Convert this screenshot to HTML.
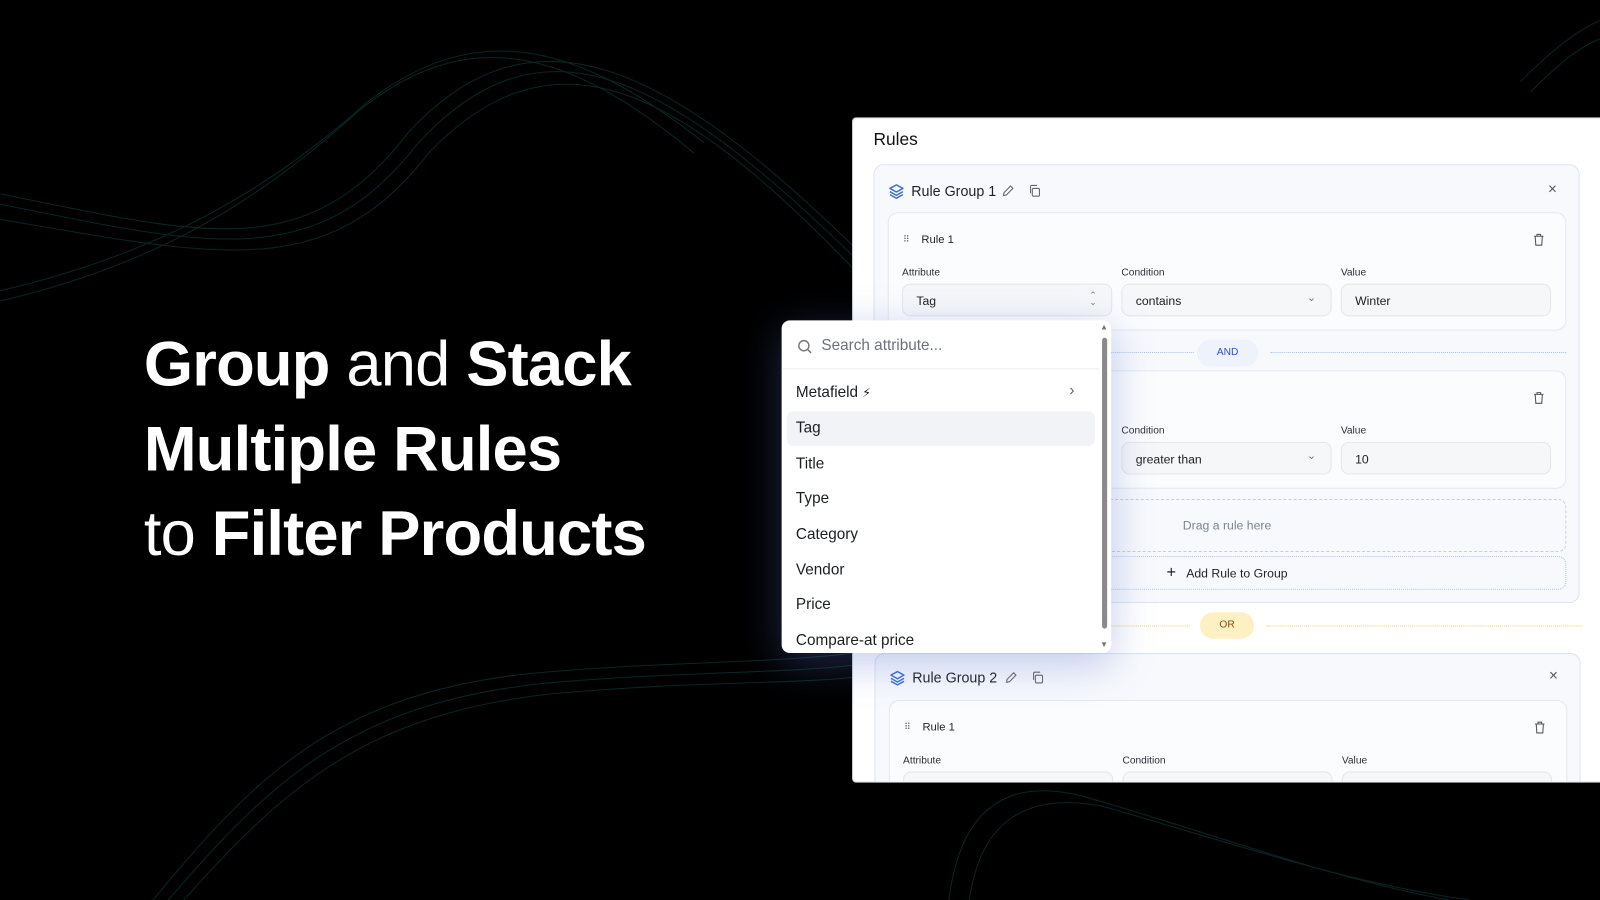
<!DOCTYPE html>
<html><head><meta charset="utf-8">
<style>
*{box-sizing:border-box;margin:0;padding:0}
html,body{width:1600px;height:900px;overflow:hidden;background:#000}
#s{position:absolute;left:0;top:0;width:1568px;height:882px;transform:scale(1.020408);transform-origin:0 0;font-family:"Liberation Sans",sans-serif}
.abs{position:absolute}
h1{position:absolute;left:141px;top:316px;color:#fff;font-size:62px;line-height:83px;font-weight:700;letter-spacing:-0.8px}
h1 span{font-weight:400}
.panel{left:835px;top:115px;width:760px;height:652px;background:#fff;border:1px solid #cfd3da;border-radius:4px 0 0 4px;overflow:hidden}
.grp{position:absolute;background:#f7f9fd;border:1px solid #d9e5f7;border-radius:10px}
.card{position:absolute;background:#fbfcfe;border:1px solid #e4e8ef;border-radius:10px}
.t{position:absolute;white-space:nowrap;color:#1f2328}
.lbl{font-size:10px;color:#2b2f36}
.inp{position:absolute;height:32px;width:206px;background:#f6f7f9;border:1px solid #e3e6eb;border-radius:8px;font-size:12px;color:#222;padding:9px 13px}
.dd{left:766px;top:314px;width:323px;height:326px;background:#fff;border-radius:8px;box-shadow:0 10px 40px rgba(90,110,200,.35);overflow:hidden}
.it{position:absolute;left:14px;font-size:15px;color:#1b1e24}
</style></head><body><div id="s">
<svg class="abs" style="left:0;top:0" width="1568" height="882" viewBox="0 0 1568 882" fill="none" stroke="#0c302d" stroke-width="1" opacity=".8">
<g>
<path d="M0 190 C200 230 300 260 400 130 C520 0 650 60 835 240"/>
<path d="M0 200 C200 240 310 270 410 140 C530 10 650 70 835 250"/>
<path d="M0 215 C210 250 320 280 420 150 C540 25 660 80 835 262"/>
<path d="M0 295 C150 260 250 200 350 110 C460 20 560 50 680 150"/>
<path d="M0 285 C150 250 260 190 360 100 C470 15 570 45 690 140"/>
<path d="M150 882 C250 760 330 680 520 660 C650 648 760 650 835 640"/>
<path d="M165 882 C265 765 345 690 530 670 C660 658 770 660 835 652"/>
<path d="M180 882 C280 770 360 700 540 680 C670 668 780 670 835 664"/>
<path d="M930 882 C940 800 980 760 1060 780 C1200 820 1300 860 1420 882"/>
<path d="M950 882 C960 810 1000 775 1080 790 C1220 830 1320 865 1440 882"/>
<path d="M1490 80 C1520 50 1545 30 1568 20"/>
<path d="M1500 90 C1530 60 1550 45 1568 38"/>
</g></svg>

<h1>Group <span>and</span> Stack<br>Multiple Rules<br><span>to</span> Filter Products</h1>

<div class="abs panel">
 <div class="t" style="left:20px;top:11px;font-size:17px;color:#111">Rules</div>
 <div class="grp" style="left:20px;top:45px;width:692px;height:430px">
  <svg class="abs" style="left:13px;top:17px" width="17" height="17" viewBox="0 0 24 24" fill="none" stroke="#3b6fe0" stroke-width="2" stroke-linejoin="round"><path d="M12 3 3 8l9 5 9-5z"/><path d="M3 12.5l9 5 9-5"/><path d="M3 16.5l9 5 9-5"/></svg>
  <div class="t" style="left:36px;top:17px;font-size:14px">Rule Group 1</div>
  <svg class="abs" style="left:124px;top:18px" width="14" height="14" viewBox="0 0 24 24" fill="none" stroke="#666" stroke-width="1.8"><path d="M4 20l1-5L16 4l4 4L9 19z"/></svg>
  <svg class="abs" style="left:150px;top:18px" width="14" height="14" viewBox="0 0 24 24" fill="none" stroke="#666" stroke-width="1.8"><rect x="8" y="8" width="12" height="13" rx="2"/><path d="M5 16V5a2 2 0 0 1 2-2h9"/></svg>
  <div class="t" style="left:660px;top:15px;font-size:15px;color:#555">×</div>
  <div class="card" style="left:13px;top:46px;width:665px;height:116px">
   <div class="t" style="left:14px;top:20px;font-size:9px;color:#667">⠿</div>
   <div class="t" style="left:32px;top:20px;font-size:11px">Rule 1</div>
   <svg class="abs" style="left:630px;top:19px" width="14" height="14" viewBox="0 0 24 24" fill="none" stroke="#555" stroke-width="1.8"><path d="M4 6h16M9 6V3h6v3M6 6l1 15h10l1-15"/></svg>
   <div class="t lbl" style="left:13px;top:53px">Attribute</div>
   <div class="t lbl" style="left:228px;top:53px">Condition</div>
   <div class="t lbl" style="left:443px;top:53px">Value</div>
   <div class="inp" style="left:13px;top:69px">Tag<span style="position:absolute;right:14px;top:7px;font-size:9px;color:#777;line-height:7px">⌃<br>⌄</span></div>
   <div class="inp" style="left:228px;top:69px">contains<span style="position:absolute;right:14px;top:6px;font-size:11px;color:#777">⌄</span></div>
   <div class="inp" style="left:443px;top:69px">Winter</div>
  </div>
  <div class="abs" style="left:13px;top:183px;width:300px;border-top:1px dotted #a9c3ee"></div>
  <div class="abs" style="left:388px;top:183px;width:290px;border-top:1px dotted #a9c3ee"></div>
  <div class="abs" style="left:316px;top:171px;width:60px;height:26px;border-radius:13px;background:#edf2fc;color:#2d4fc8;font-size:10px;text-align:center;line-height:26px">AND</div>
  <div class="card" style="left:13px;top:201px;width:665px;height:116px">
   <svg class="abs" style="left:630px;top:19px" width="14" height="14" viewBox="0 0 24 24" fill="none" stroke="#555" stroke-width="1.8"><path d="M4 6h16M9 6V3h6v3M6 6l1 15h10l1-15"/></svg>
   <div class="t lbl" style="left:228px;top:53px">Condition</div>
   <div class="t lbl" style="left:443px;top:53px">Value</div>
   <div class="inp" style="left:228px;top:69px">greater than<span style="position:absolute;right:14px;top:6px;font-size:11px;color:#777">⌄</span></div>
   <div class="inp" style="left:443px;top:69px">10</div>
  </div>
  <div class="abs" style="left:13px;top:327px;width:665px;height:52px;border:1px dashed #c9ced6;border-radius:8px;text-align:center;line-height:50px;font-size:12px;color:#7a8494">Drag a rule here</div>
  <div class="abs" style="left:13px;top:383px;width:665px;height:33px;border:1px dotted #a9c3ee;border-radius:8px;text-align:center;line-height:31px;font-size:12px;color:#1f2328"><span style="font-size:16px;margin-right:10px">+</span>Add Rule to Group</div>
 </div>
 <div class="abs" style="left:20px;top:497px;width:310px;border-top:1px dotted #f0cf66"></div>
 <div class="abs" style="left:405px;top:497px;width:310px;border-top:1px dotted #f0cf66"></div>
 <div class="abs" style="left:340px;top:484px;width:53px;height:26px;border-radius:13px;background:#fdf1c4;color:#8a4b10;font-size:10px;text-align:center;line-height:26px">OR</div>
 <div class="grp" style="left:21px;top:524px;width:692px;height:200px">
  <svg class="abs" style="left:13px;top:15px" width="17" height="17" viewBox="0 0 24 24" fill="none" stroke="#3b6fe0" stroke-width="2" stroke-linejoin="round"><path d="M12 3 3 8l9 5 9-5z"/><path d="M3 12.5l9 5 9-5"/><path d="M3 16.5l9 5 9-5"/></svg>
  <div class="t" style="left:36px;top:15px;font-size:14px">Rule Group 2</div>
  <svg class="abs" style="left:126px;top:16px" width="14" height="14" viewBox="0 0 24 24" fill="none" stroke="#666" stroke-width="1.8"><path d="M4 20l1-5L16 4l4 4L9 19z"/></svg>
  <svg class="abs" style="left:152px;top:16px" width="14" height="14" viewBox="0 0 24 24" fill="none" stroke="#666" stroke-width="1.8"><rect x="8" y="8" width="12" height="13" rx="2"/><path d="M5 16V5a2 2 0 0 1 2-2h9"/></svg>
  <div class="t" style="left:660px;top:13px;font-size:15px;color:#555">×</div>
  <div class="card" style="left:13px;top:45px;width:665px;height:116px">
   <div class="t" style="left:14px;top:20px;font-size:9px;color:#667">⠿</div>
   <div class="t" style="left:32px;top:20px;font-size:11px">Rule 1</div>
   <svg class="abs" style="left:630px;top:19px" width="14" height="14" viewBox="0 0 24 24" fill="none" stroke="#555" stroke-width="1.8"><path d="M4 6h16M9 6V3h6v3M6 6l1 15h10l1-15"/></svg>
   <div class="t lbl" style="left:13px;top:53px">Attribute</div>
   <div class="t lbl" style="left:228px;top:53px">Condition</div>
   <div class="t lbl" style="left:443px;top:53px">Value</div>
   <div class="inp" style="left:13px;top:69px"></div>
   <div class="inp" style="left:228px;top:69px"></div>
   <div class="inp" style="left:443px;top:69px"></div>
  </div>
 </div>
</div>

<div class="abs dd">
 <svg class="abs" style="left:14px;top:17px" width="17" height="17" viewBox="0 0 24 24" fill="none" stroke="#777" stroke-width="2"><circle cx="11" cy="11" r="7"/><path d="M16.5 16.5 21 21"/></svg>
 <div class="t" style="left:39px;top:16px;font-size:15px;color:#6b717c">Search attribute...</div>
 <div class="abs" style="left:0;top:47px;width:311px;border-top:1px solid #eceef2"></div>
 <div class="it" style="top:62px">Metafield <span style="font-size:12px">⚡︎</span></div>
 <div class="t" style="left:282px;top:60px;font-size:15px;color:#666">›</div>
 <div class="abs" style="left:5px;top:89px;width:302px;height:34px;background:#f1f3f7;border-radius:6px"></div>
 <div class="it" style="top:97px">Tag</div>
 <div class="it" style="top:132px">Title</div>
 <div class="it" style="top:166px">Type</div>
 <div class="it" style="top:201px">Category</div>
 <div class="it" style="top:236px">Vendor</div>
 <div class="it" style="top:270px">Price</div>
 <div class="it" style="top:305px">Compare-at price</div>
 <div class="abs" style="left:314px;top:17px;width:5px;height:285px;background:#8a8a8a;border-radius:3px"></div>
 <div class="t" style="left:312px;top:2px;font-size:8px;color:#777">▲</div>
 <div class="t" style="left:312px;top:313px;font-size:8px;color:#777">▼</div>
</div>
</div></body></html>
